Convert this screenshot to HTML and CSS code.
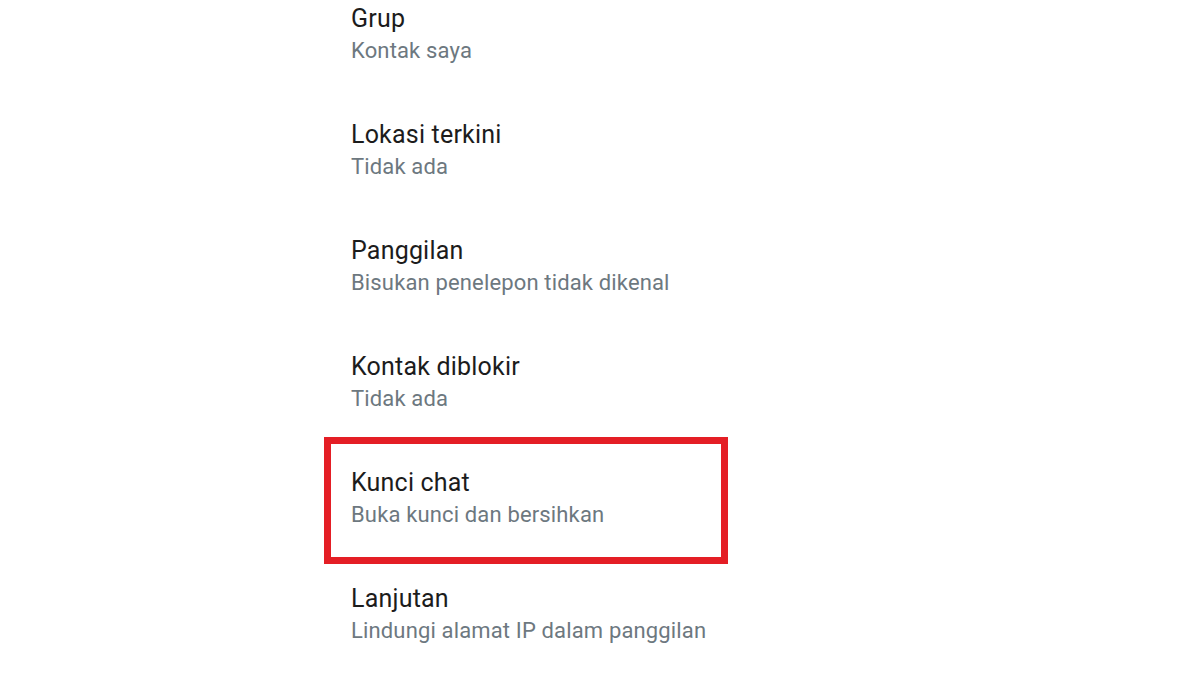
FILE: index.html
```html
<!DOCTYPE html>
<html lang="id">

<head>
    <meta charset="UTF-8">
    <meta name="viewport" content="width=device-width, initial-scale=1.0">
    <title>Privasi</title>
    <link rel="stylesheet" href="styles.css">
</head>

<body>
    <div class="settings">
        <div class="item">
            <div class="title">Grup</div>
            <div class="sub">Kontak saya</div>
        </div>
        <div class="item">
            <div class="title">Lokasi terkini</div>
            <div class="sub">Tidak ada</div>
        </div>
        <div class="item">
            <div class="title">Panggilan</div>
            <div class="sub">Bisukan penelepon tidak dikenal</div>
        </div>
        <div class="item">
            <div class="title">Kontak diblokir</div>
            <div class="sub">Tidak ada</div>
        </div>
        <div class="item marked">
            <div class="title">Kunci chat</div>
            <div class="sub">Buka kunci dan bersihkan</div>
        </div>
        <div class="item">
            <div class="title">Lanjutan</div>
            <div class="sub">Lindungi alamat IP dalam panggilan</div>
        </div>
    </div>
</body>

</html>
```

FILE: styles.css
```css
body {
    margin: 0;
    background-color: #fff;
    font-family: Roboto, "Noto Sans", Arial, sans-serif;
}

.settings {
    display: flex;
    flex-direction: column;
    gap: 52px;
    padding: 3px 0 0 351px;
}

.title {
    font-size: 25px;
    line-height: 32px;
    letter-spacing: 0.2px;
    color: #1c1c1c;
}

.sub {
    font-size: 22px;
    line-height: 32px;
    letter-spacing: 0.15px;
    color: #6d787f;
}

.marked {
    box-sizing: border-box;
    width: 404px;
    margin: -30px 0 -33px -27px;
    padding: 23px 20px 26px;
    border: 7px solid #e41e25;
}
```
